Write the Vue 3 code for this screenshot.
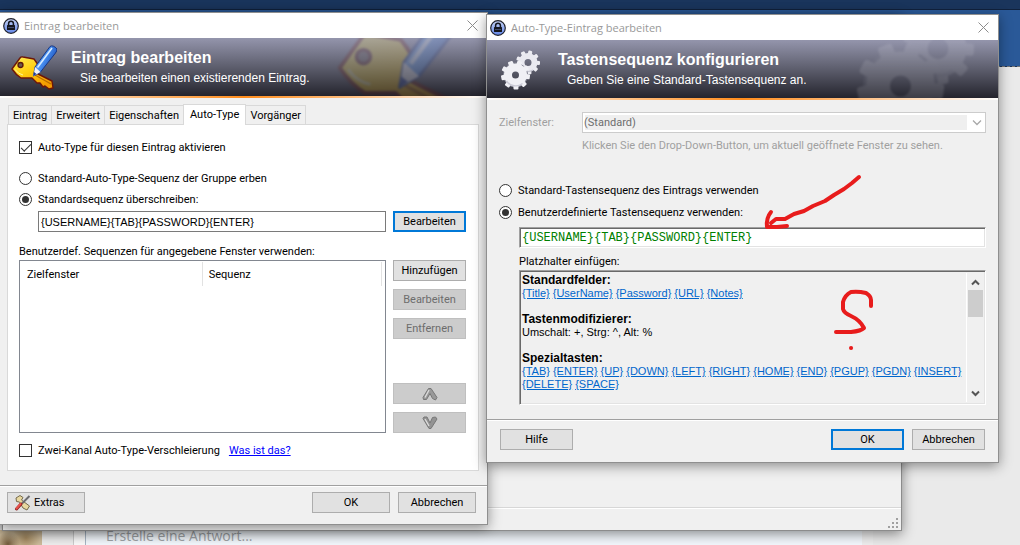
<script setup>
import { ref } from 'vue'

const tabs = ['Eintrag', 'Erweitert', 'Eigenschaften', 'Auto-Type', 'Vorgänger']
const activeTab = ref('Auto-Type')
const enabled = ref(true)
const obfuscate = ref(false)
const inherit = ref('override')
const sequenceMode = ref('custom')
const sequence = ref('{USERNAME}{TAB}{PASSWORD}{ENTER}')
const customSequence = ref('{USERNAME}{TAB}{PASSWORD}{ENTER}')
const fields = ['{Title}', '{UserName}', '{Password}', '{URL}', '{Notes}']
const keysA = ['{TAB}', '{ENTER}', '{UP}', '{DOWN}', '{LEFT}', '{RIGHT}', '{HOME}', '{END}', '{PGUP}', '{PGDN}', '{INSERT}']
const keysB = ['{DELETE}', '{SPACE}']
const teeth = [0, 40, 80, 120, 160, 200, 240, 280, 320]
</script>

<template>
  <div class="desktop">
    <svg class="defs" width="0" height="0" aria-hidden="true">
      <defs>
        <linearGradient id="gold" x1="0" y1="0" x2="0.6" y2="1">
          <stop offset="0" stop-color="#ffee58" />
          <stop offset="0.5" stop-color="#ffcf10" />
          <stop offset="1" stop-color="#f39a00" />
        </linearGradient>
        <linearGradient id="blue" x1="0" y1="0" x2="1" y2="0.6">
          <stop offset="0" stop-color="#a9d2ff" />
          <stop offset="0.5" stop-color="#4a92f2" />
          <stop offset="1" stop-color="#1546b4" />
        </linearGradient>
        <linearGradient id="disc" x1="0" y1="0" x2="0" y2="1">
          <stop offset="0" stop-color="#c9d6f8" />
          <stop offset="1" stop-color="#5f83e6" />
        </linearGradient>
        <symbol id="lock" viewBox="0 0 16 16">
          <circle cx="8" cy="8" r="7.3" fill="url(#disc)" stroke="#20222c" stroke-width="1.2" />
          <path d="M5.6 7.5V5.6a2.4 2.4 0 0 1 4.8 0v1.9" fill="none" stroke="#14161f" stroke-width="1.5" />
          <rect x="4" y="7" width="8" height="5" rx="0.6" fill="#14161f" />
          <path d="M5 9.5h6" stroke="#56648f" stroke-width="0.7" />
        </symbol>
        <symbol id="keypen" viewBox="0 0 46 46">
          <path d="M1 24 L9 13 Q10 11.500 12 12 L23 14 Q27 19 29 24 L27 29 L41 36 L42 43 L38 44 L34 41 L32 42 L29 38 L26 38 L21 33 L10 33 Q5 30 1 24Z" fill="url(#gold)" stroke="#6d1709" stroke-width="1.4" stroke-linejoin="round" />
          <path d="M24 30 L40 39" stroke="#b86a00" stroke-width="1.2" />
          <path d="M12 30 Q7 29 4 24.500" fill="none" stroke="#fff6a0" stroke-width="1" />
          <circle cx="9.500" cy="20" r="2.500" fill="#6a5a50" stroke="#5a160c" stroke-width="1.3" />
          <path d="M22.500 31 L24 22 L39 1.500 Q42 -0.500 46 4 Q46 6 44.500 8 L29.500 27Z" fill="url(#blue)" stroke="#163684" stroke-width="1" stroke-linejoin="round" />
          <path d="M22.500 31 L24 22 L29.500 27Z" fill="#f2f3f7" />
          <path d="M22.500 31 L23 27 L25.500 29Z" fill="#1d3a9c" />
          <path d="M26.500 22.500 L41 3" stroke="#d8ecff" stroke-width="1.6" />
        </symbol>
        <symbol id="gears" viewBox="0 0 40 40">
          <g transform="translate(28 12.500)">
            <rect v-for="t in teeth" :key="'a' + t" x="-2" y="-12" width="4" height="5" rx="1" fill="#ececf2" :transform="`rotate(${t + 12})`" />
            <circle r="6.500" fill="none" stroke="#e9e9f0" stroke-width="6" />
            <path d="M-8 4 A9 9 0 0 0 5 7.500" fill="none" stroke="#c4c4d0" stroke-width="1.2" />
          </g>
          <g transform="translate(15.500 25)">
            <circle r="12" fill="none" stroke="#8b8c9b" stroke-width="1" />
            <rect v-for="t in teeth" :key="'b' + t" x="-2.500" y="-14.500" width="5" height="6" rx="1" fill="#f0f0f5" :transform="`rotate(${t + 18})`" />
            <circle r="7.500" fill="none" stroke="#f0f0f5" stroke-width="8" />
            <path d="M-9 6 A11 11 0 0 0 7 8.500" fill="none" stroke="#cacad6" stroke-width="1.4" />
          </g>
        </symbol>
      </defs>
    </svg>

    <div class="banner"></div>
    <div class="forum">
      <div class="avatar"></div>
      <div class="reply">Erstelle eine Antwort...</div>
    </div>
    <div class="main-window">
      <div class="status">
        <svg width="12" height="12" viewBox="0 0 12 12" fill="#a0a0a0" aria-hidden="true">
          <path d="M9 0h2v2h-2zM9 4h2v2h-2zM9 8h2v2h-2zM5 4h2v2h-2zM5 8h2v2h-2zM1 8h2v2h-2z" />
        </svg>
      </div>
    </div>

    <section class="window entry">
      <header class="titlebar">
        <svg class="lock" aria-hidden="true"><use href="#lock" /></svg>
        <span>Eintrag bearbeiten</span>
        <button class="close" aria-label="Schließen">
          <svg width="11" height="11" viewBox="0 0 11 11"><path d="M.5 .5l10 10M10.500 .5l-10 10" stroke="#8c8c8c" /></svg>
        </button>
      </header>
      <div class="hero">
        <svg class="ghost ghost-key" aria-hidden="true"><use href="#keypen" /></svg>
        <svg class="hero-key" aria-hidden="true"><use href="#keypen" /></svg>
        <div class="hero-text">
          <h1>Eintrag bearbeiten</h1>
          <p>Sie bearbeiten einen existierenden Eintrag.</p>
        </div>
      </div>
      <div class="stripe"></div>

      <div class="entry-body">
        <div class="tabs" role="tablist">
          <button v-for="t in tabs" :key="t" role="tab" class="tab" :class="{ active: t === activeTab }" :aria-selected="t === activeTab" @click="activeTab = t">{{ t }}</button>
        </div>
        <div class="panel">
          <label class="option first"><input v-model="enabled" type="checkbox" />Auto-Type für diesen Eintrag aktivieren</label>
          <label class="option"><input v-model="inherit" type="radio" name="inherit" value="inherit" />Standard-Auto-Type-Sequenz der Gruppe erben</label>
          <label class="option"><input v-model="inherit" type="radio" name="inherit" value="override" />Standardsequenz überschreiben:</label>
          <div class="seq-row">
            <input v-model="sequence" class="seq" type="text" aria-label="Standardsequenz" />
            <button class="btn small focus">Bearbeiten</button>
          </div>
          <div class="caption">Benutzerdef. Sequenzen für angegebene Fenster verwenden:</div>
          <div class="list-row">
            <div class="list">
              <table>
                <thead><tr><th>Zielfenster</th><th>Sequenz</th></tr></thead>
              </table>
            </div>
            <div class="side">
              <button class="btn small">Hinzufügen</button>
              <button class="btn small" disabled>Bearbeiten</button>
              <button class="btn small" disabled>Entfernen</button>
              <span class="grow"></span>
              <button class="btn small" disabled aria-label="Nach oben">
                <svg width="16" height="14" viewBox="0 0 16 14"><path d="M1 10.500 L6.500 1.500 H9 L15 10.500 L13.500 13 L10.500 11.500 L8 6.500 L4.500 12.500 L1.500 12.500Z" fill="#999" stroke="#777" /><path d="M3 10.500 L7 3" stroke="#dedede" stroke-width="1.3" /></svg>
              </button>
              <button class="btn small" disabled aria-label="Nach unten">
                <svg width="16" height="14" viewBox="0 0 16 14"><path d="M1 2.500 L2 1 H5 L8 7 L10.500 1.500 L13.500 1 L15 3 L9 12.500 H7Z" fill="#939393" stroke="#777" /><path d="M3 3 L7 10" stroke="#dedede" stroke-width="1.3" /></svg>
              </button>
            </div>
          </div>
          <div class="bottom-row">
            <label class="option"><input v-model="obfuscate" type="checkbox" />Zwei-Kanal Auto-Type-Verschleierung</label>
            <a class="what" href="#">Was ist das?</a>
          </div>
        </div>
      </div>
      <footer class="entry-footer">
        <button class="btn wide extras">
          <svg width="17" height="16" viewBox="0 0 17 16" aria-hidden="true">
            <path d="M2 3 L6 0.500 L9 2.500 L7.500 5 L15.500 11 L13 15 L9 13 L5.500 7 L2.500 6.500Z" fill="#e8d8a0" stroke="#756a4c" />
            <path d="M15.500 1 L8 8.500" stroke="#6c6c70" stroke-width="2" />
            <path d="M7 9 L2.500 14" stroke="#8d2020" stroke-width="3" stroke-linecap="round" />
            <path d="M6.500 9 L2.500 13.500" stroke="#e8524c" stroke-width="2" stroke-linecap="round" />
          </svg>
          Extras
        </button>
        <span class="grow"></span>
        <button class="btn wide">OK</button>
        <button class="btn wide">Abbrechen</button>
      </footer>
    </section>

    <section class="window auto">
      <header class="titlebar">
        <svg class="lock" aria-hidden="true"><use href="#lock" /></svg>
        <span>Auto-Type-Eintrag bearbeiten</span>
        <button class="close" aria-label="Schließen">
          <svg width="11" height="11" viewBox="0 0 11 11"><path d="M.5 .5l10 10M10.500 .5l-10 10" stroke="#8c8c8c" /></svg>
        </button>
      </header>
      <div class="hero">
        <svg class="ghost ghost-gears" aria-hidden="true"><use href="#gears" /></svg>
        <svg class="hero-gears" aria-hidden="true"><use href="#gears" /></svg>
        <div class="hero-text">
          <h1>Tastensequenz konfigurieren</h1>
          <p>Geben Sie eine Standard-Tastensequenz an.</p>
        </div>
      </div>
      <div class="stripe"></div>

      <div class="auto-body">
        <div class="target">
          <label for="target">Zielfenster:</label>
          <div class="combo">
            <select id="target" disabled><option>(Standard)</option></select>
            <svg width="10" height="6" viewBox="0 0 10 6" aria-hidden="true"><path d="M1 .5 L5 4.500 L9 .5" fill="none" stroke="#a8a8a8" stroke-width="1.3" /></svg>
          </div>
        </div>
        <div class="hint">Klicken Sie den Drop-Down-Button, um aktuell geöffnete Fenster zu sehen.</div>
        <label class="option"><input v-model="sequenceMode" type="radio" name="mode" value="default" />Standard-Tastensequenz des Eintrags verwenden</label>
        <label class="option"><input v-model="sequenceMode" type="radio" name="mode" value="custom" />Benutzerdefinierte Tastensequenz verwenden:</label>
        <div class="indent">
          <input v-model="customSequence" class="code sunken" type="text" aria-label="Benutzerdefinierte Tastensequenz" />
          <div class="caption">Platzhalter einfügen:</div>
          <div class="help sunken">
            <div class="help-text">
              <b>Standardfelder:</b>
              <div class="links"><a v-for="k in fields" :key="k" href="#">{{ k }}</a></div>
              <br />
              <b>Tastenmodifizierer:</b>
              <div>Umschalt: +, Strg: ^, Alt: %</div>
              <br />
              <b>Spezialtasten:</b>
              <div class="links"><a v-for="k in keysA" :key="k" href="#">{{ k }}</a></div>
              <div class="links"><a v-for="k in keysB" :key="k" href="#">{{ k }}</a></div>
            </div>
            <div class="scroll">
              <svg width="9" height="7" viewBox="0 0 9 7"><path d="M1 5.500 L4.500 2 L8 5.500" fill="none" stroke="#555" stroke-width="2" /></svg>
              <div class="thumb"></div>
              <span class="grow"></span>
              <svg width="9" height="7" viewBox="0 0 9 7"><path d="M1 1.500 L4.500 5 L8 1.500" fill="none" stroke="#555" stroke-width="2" /></svg>
            </div>
          </div>
        </div>
      </div>
      <footer class="auto-footer">
        <button class="btn small">Hilfe</button>
        <span class="grow"></span>
        <button class="btn small focus">OK</button>
        <button class="btn small">Abbrechen</button>
      </footer>
      <svg class="ink" width="120" height="190" viewBox="760 170 120 190" fill="none" stroke="#e81c1c" stroke-width="4" stroke-linecap="round" stroke-linejoin="round" aria-hidden="true">
        <path d="M859 177 L852 183 L844 189 L834 195 L825 201 L813 206 L804 211 L794 214 L785 219 L776 219 L771 223" />
        <path d="M771 212 Q766 218 767 227 L777 227 L787 226" />
        <path d="M871 306 V300 Q871 296 866 293 Q858 291 851 292 Q845 295 843 302 V309 Q844 313 851 316 Q860 320 864 328 Q861 331 851 332 H836" />
        <path d="M851 348h.1" />
      </svg>
    </section>
  </div>
</template>

<style>
html,
body {
  height: 100%;
  overflow: hidden;
}
</style>

<style scoped>
* {
  box-sizing: border-box;
}
.desktop {
  position: relative;
  display: grid;
  grid-template-columns: minmax(0, 488fr) minmax(0, 532fr);
  align-items: start;
  height: 100vh;
  overflow: hidden;
  background: #eaeaea;
  color: #000;
  font: 11px/13px Roboto, "Liberation Sans", sans-serif;
}
.defs {
  position: absolute;
}
.banner {
  position: absolute;
  inset: 0 0 auto;
  height: 67px;
  border-bottom: 1px dashed #777;
  background: linear-gradient(#1a355c 9px, #10213c 9px, #10213c 10px, #2a5998 10px);
}
.forum {
  position: absolute;
  inset: 530px 147px 0 0;
  display: flex;
  background: #eee;
}
.avatar {
  width: 42px;
  margin-right: 32px;
  background: radial-gradient(circle at 8px 14px, #745c3c, transparent 12px), radial-gradient(circle at 26px 8px, #a58b62, transparent 14px), #cdbb9b;
}
.reply {
  flex: 1;
  margin-left: 11px;
  margin-right: 11px;
  padding-left: 20px;
  border-left: 1px solid #a8b6c4;
  background: #f3f8fd;
  box-shadow: -11px 0 #fafafa, -12px 0 #ccc;
  color: #a0a4a8;
  font: 14px/12px "Open Sans", "Noto Sans", sans-serif;
}
.main-window {
  position: absolute;
  inset: 14px 118px auto 2px;
  height: 517px;
  display: flex;
  align-items: flex-end;
  border: 1px solid #8c8c8c;
  background: #f0f0f0;
  box-shadow: 0 3px 12px rgba(0, 0, 0, 0.45);
}
.status {
  flex: 1;
  display: flex;
  align-items: flex-end;
  justify-content: flex-end;
  height: 23px;
  padding-right: 2px;
  border-top: 1px solid #d7d7d7;
  box-shadow: inset 0 1px #fff;
}
.window {
  position: relative;
  border: 1px solid #8f8f8f;
  background: #f0f0f0;
  box-shadow: 0 3px 12px rgba(0, 0, 0, 0.42);
}
.entry {
  margin-top: 12px;
  border-left: 0;
}
.auto {
  margin: 14px 21px 0 -2px;
}
.titlebar {
  display: flex;
  align-items: center;
  height: 25px;
  padding: 0 9px 0 3px;
  background: #fff;
  color: #999;
  font: 11px/16px "Open Sans", "Noto Sans", sans-serif;
}
.lock {
  width: 16px;
  height: 16px;
  margin-right: 5px;
}
.close {
  display: flex;
  margin-left: auto;
  padding: 0;
  border: 0;
  background: none;
}
.hero {
  position: relative;
  display: flex;
  height: 58px;
  overflow: hidden;
  background: linear-gradient(#9495ac, #5d5e6d 50%, #24242d);
  color: #fff;
}
.hero-key {
  position: relative;
  flex: none;
  width: 46px;
  height: 46px;
  margin: 7px 14px 0 11px;
}
.hero-gears {
  position: relative;
  flex: none;
  width: 40px;
  height: 40px;
  margin: 10px 18px 0 13px;
}
.hero-text {
  position: relative;
  padding-top: 11px;
}
h1 {
  margin: 0;
  font: bold 16px/18px "Liberation Sans", Arial, sans-serif;
}
.hero p {
  margin: 3px 0 0 9px;
  font: 12px/16px "Liberation Sans", Arial, sans-serif;
}
.ghost {
  position: absolute;
  opacity: 0.2;
  filter: blur(1px);
}
.ghost-key {
  top: -37px;
  right: 22px;
  width: 128px;
  height: 128px;
}
.ghost-gears {
  top: -29px;
  right: 24px;
  width: 120px;
  height: 120px;
  opacity: 0.12;
}
.stripe {
  height: 2px;
  background: linear-gradient(90deg, #fff, #ff8c1c 50%, #fff);
}
.entry-body {
  padding: 6px 8px 14px 7px;
}
.tabs {
  display: flex;
  align-items: flex-end;
  padding-left: 1px;
}
.tab {
  height: 19px;
  margin-right: -1px;
  padding: 0 4px;
  border: 1px solid #d9d9d9;
  border-bottom: 0;
  background: #f0f0f0;
  color: inherit;
  font: inherit;
}
.tab.active {
  z-index: 1;
  height: 21px;
  padding: 0 6px 2px;
  margin-bottom: -1px;
  background: #fff;
}
.panel {
  padding: 12px 12px 9px 11px;
  border: 1px solid #d9d9d9;
  background: #fff;
}
.option {
  display: flex;
  align-items: center;
  height: 21px;
}
.auto .option {
  height: 22px;
}
.option.first {
  margin-bottom: 10px;
}
.option input {
  flex: none;
  display: grid;
  place-items: center;
  width: 13px;
  height: 13px;
  margin: 0 6px 0 0;
  border: 1px solid #333;
  background: #fff;
  appearance: none;
}
.option input[type="radio"] {
  border-radius: 50%;
}
.option input[type="radio"]:checked::after {
  content: "";
  width: 7px;
  height: 7px;
  border-radius: 50%;
  background: #333;
}
.option input[type="checkbox"]:checked::after {
  content: "";
  width: 9px;
  height: 4px;
  margin-bottom: 3px;
  border: solid #333;
  border-width: 0 0 1px 1px;
  transform: rotate(-45deg);
}
.seq-row,
.list-row {
  display: flex;
  gap: 7px;
}
.seq-row {
  margin: 1px 0 9px 19px;
}
.seq {
  flex: 1;
  min-width: 0;
  height: 21px;
  padding: 0 2px;
  border: 1px solid #7a7a7a;
  background: #fff;
  font: 11px/13px "Liberation Sans", Arial, sans-serif;
}
.btn {
  display: flex;
  align-items: center;
  justify-content: center;
  height: 21px;
  padding: 0;
  border: 1px solid #adadad;
  background: #e1e1e1;
  color: #000;
  font: inherit;
}
.btn.small {
  width: 73px;
}
.btn.wide {
  width: 78px;
}
.btn.focus {
  border: 2px solid #0078d7;
}
.btn:disabled {
  border-color: #bfbfbf;
  background: #ccc;
  color: #6d6d6d;
}
.caption {
  height: 19px;
  padding-top: 1px;
  line-height: 19px;
}
.list {
  flex: 1;
  height: 173px;
  padding: 1px 3px;
  border: 1px solid #828790;
}
table {
  width: 100%;
  border-collapse: collapse;
  table-layout: fixed;
}
th {
  height: 24px;
  padding: 0 4px;
  border-right: 1px solid #e2e2e2;
  font-weight: normal;
  text-align: left;
}
th + th {
  padding-left: 6px;
}
.side {
  display: flex;
  flex-direction: column;
  gap: 8px;
}
.grow {
  flex: 1;
}
.bottom-row {
  display: flex;
  align-items: center;
  gap: 9px;
  margin-top: 7px;
}
.what {
  color: #00f;
}
.entry-footer,
.auto-footer {
  display: flex;
  border-top: 1px solid #a0a0a0;
  box-shadow: inset 0 1px #fff;
}
.entry-footer {
  gap: 8px;
  padding: 6px 11px 11px 7px;
}
.extras {
  justify-content: flex-start;
  gap: 3px;
  padding-left: 6px;
}
.auto-footer {
  gap: 8px;
  padding: 9px 13px 12px;
}
.auto-body {
  padding: 12px 12px 14px;
}
.target {
  display: flex;
  align-items: center;
  color: #a0a0a0;
}
.target label {
  flex: none;
  width: 83px;
}
.combo {
  position: relative;
  flex: 1;
}
.combo select {
  display: block;
  width: 100%;
  height: 21px;
  padding: 0 1px;
  border: 1px solid #ccc;
  box-shadow: inset 0 0 0 2px #fff;
  background: linear-gradient(90deg, #efefef calc(100% - 18px), #fff 0);
  color: #6d6d6d;
  font: inherit;
  opacity: 1;
  appearance: none;
}
.combo svg {
  position: absolute;
  top: 8px;
  right: 4px;
}
.hint {
  height: 20px;
  margin: 3px 0 23px 83px;
  color: #a0a0a0;
  line-height: 20px;
}
.indent {
  margin: 4px 0 0 20px;
}
.sunken {
  border: 1px solid;
  border-color: #a0a0a0 #fff #fff #a0a0a0;
  box-shadow: inset 1px 1px #696969, inset -1px -1px #e3e3e3;
}
.code {
  display: block;
  width: 100%;
  height: 21px;
  margin-bottom: 3px;
  padding: 0 2px;
  background: #fff;
  color: #008000;
  font: 12px/14px "Liberation Mono", monospace;
}
.help {
  display: flex;
  height: 135px;
  padding: 2px;
}
.help-text {
  flex: 1;
  min-width: 0;
  padding-top: 1px;
  font-family: "Liberation Sans", Arial, sans-serif;
}
.help-text b {
  font-size: 12px;
}
.links {
  display: flex;
  gap: 3px;
}
.links a {
  color: #0066cc;
}
.scroll {
  display: flex;
  flex-direction: column;
  align-items: center;
  width: 17px;
  padding: 6px 0 5px;
  border-left: 1px solid #fff;
}
.thumb {
  width: 15px;
  height: 27px;
  margin-top: 4px;
  background: #cdcdcd;
}
.ink {
  position: absolute;
  top: 155px;
  right: 118px;
}
</style>
